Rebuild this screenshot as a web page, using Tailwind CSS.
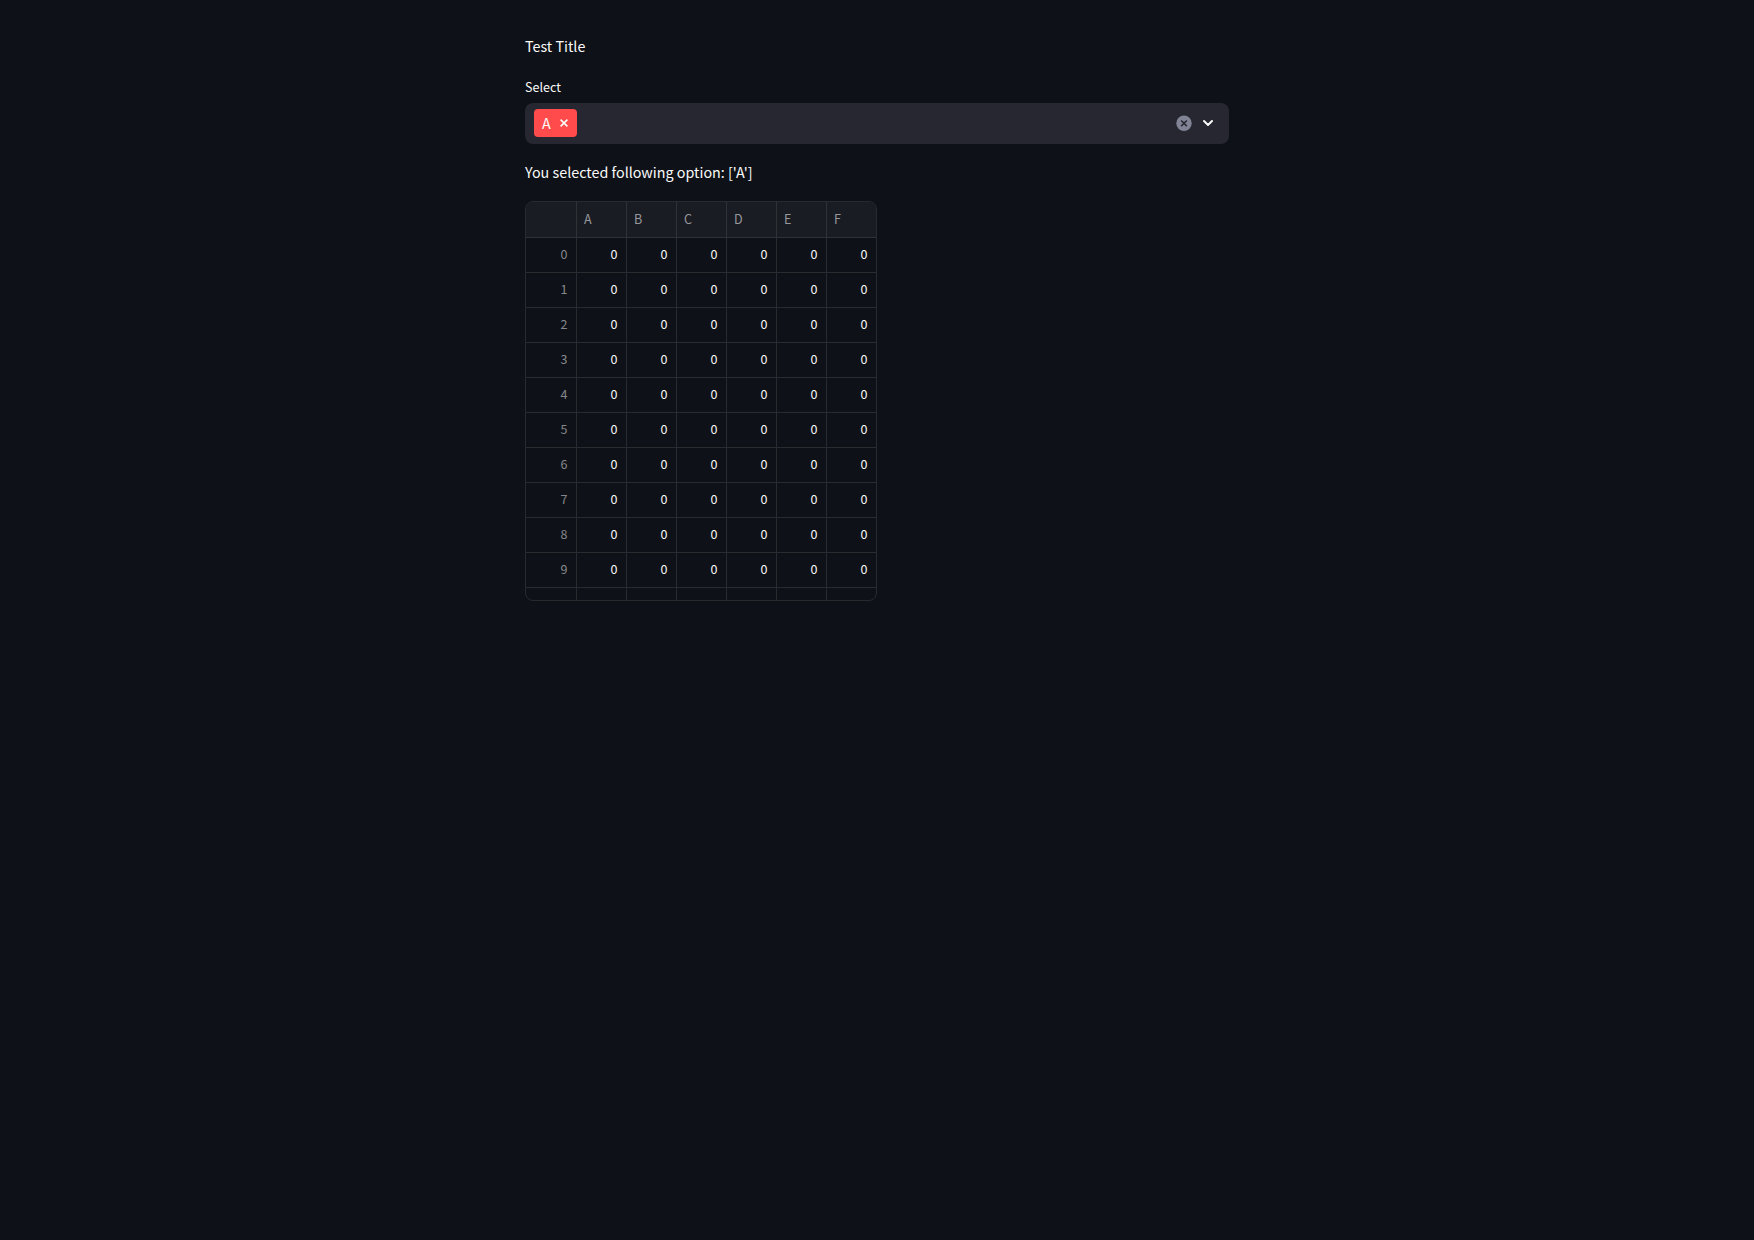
<!DOCTYPE html>
<html lang="en">
<head>
<meta charset="utf-8">
<title>Test Title</title>
<script src="https://cdn.jsdelivr.net/npm/@tailwindcss/browser@4"></script>
</head>
<body class="min-h-screen bg-[#0e1117] text-[#fafafa] font-['Noto_Sans_CJK_JP',sans-serif]">
<main class="mx-auto w-[704px] pt-[33px] text-[14.32px]">
  <p class="h-[26px] leading-[26px]">Test Title</p>
  <label class="mt-[17px] block h-[23px] text-[12.53px] leading-[22px]">Select</label>
  <div class="mt-1 flex h-[41px] items-center rounded-lg bg-[#262730] pb-px pl-[9px] pr-[15px]">
    <span class="flex h-7 w-[43px] items-center rounded bg-[#ff4b4b] pl-2 leading-7">
      <span class="w-[9px]">A</span>
      <svg class="ml-[9px] size-2" viewBox="0 0 8 8" fill="none" stroke="currentColor" stroke-width="1.6"><path d="M.6.6l6.8 6.8M7.4.6L.6 7.4"/></svg>
    </span>
    <svg class="ml-auto size-[16px]" viewBox="0 0 16 16"><circle cx="8" cy="8.3" r="7.7" fill="#808495"/><path d="M5.2 5.5l5.6 5.6M10.8 5.5l-5.6 5.6" stroke="#262730" stroke-width="1.5"/></svg>
    <svg class="ml-[10px] h-[8px] w-[12px]" viewBox="0 0 12 8" fill="none" stroke="currentColor" stroke-width="2" stroke-linecap="round" stroke-linejoin="round"><path d="M2 2l4 4 4-4"/></svg>
  </div>
  <p class="mt-[15px] h-[26px] leading-[26px]">You selected following option: ['A']</p>
  <div class="mt-4 h-[400px] w-[352px] overflow-hidden rounded-lg border border-[#282a2e]">
    <div id="grid" class="grid grid-cols-[51px_repeat(6,50px)] text-[12.53px]"></div>
  </div>
</main>
<script>
  const grid = document.getElementById('grid');
  const add = (text, classes) => {
    const cell = document.createElement('div');
    cell.textContent = text;
    cell.className = 'border-r border-b ' + classes;
    grid.append(cell);
  };
  for (const name of ['', 'A', 'B', 'C', 'D', 'E', 'F'])
    add(name, 'h-[36px] bg-[#1a1c23] pl-[7px] leading-[33px] text-[#97989b] border-[#303236]');
  for (let row = 0; row < 11; row++) {
    add(row < 10 ? row : '', 'h-[35px] pr-[8.5px] text-right leading-[31px] text-[#86888b] border-[#292b2e]');
    for (let col = 0; col < 6; col++)
      add(row < 10 ? '0' : '', 'h-[35px] pr-[8.5px] text-right leading-[31px] border-[#292b2e]');
  }
</script>
</body>
</html>
